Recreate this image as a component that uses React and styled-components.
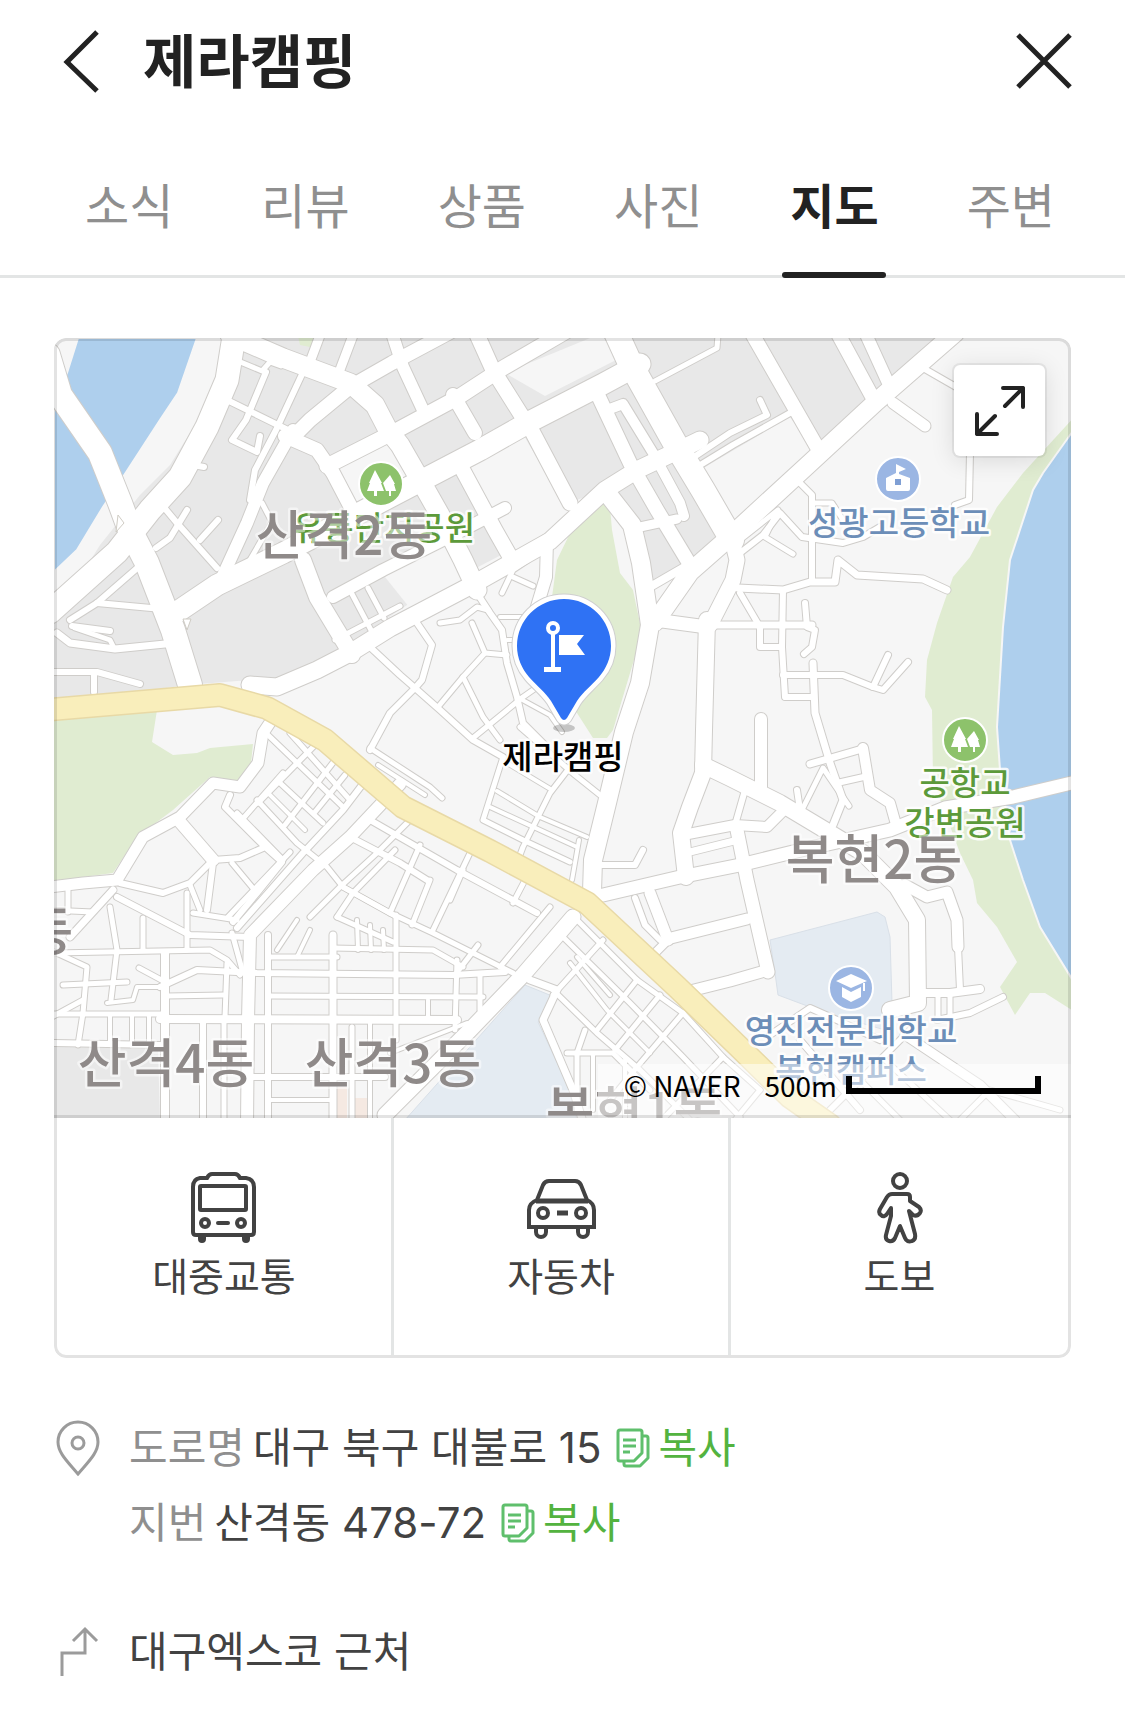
import React, { useState } from "react";
import styled, { createGlobalStyle } from "styled-components";

// Style
const colors = {
  text: "#222",
  body: "#424242",
  muted: "#8f8f8f",
  line: "#e3e5e5",
  green: "#53b33f",
  greenIcon: "#5fbf6c",
};

const GlobalStyle = createGlobalStyle`
  *, *::before, *::after {
    box-sizing: border-box;
  }
  body {
    margin: 0;
    background: #fff;
    color: ${colors.text};
    font-family: "Noto Sans CJK KR", "Noto Sans", sans-serif;
  }
  button {
    padding: 0;
    border: 0;
    background: none;
    color: inherit;
    font: inherit;
    cursor: pointer;
  }
  a {
    color: inherit;
    text-decoration: none;
  }
  svg {
    display: block;
    flex: none;
  }
`;

const Header = styled.header`
  display: flex;
  align-items: center;
  height: 122px;
  padding: 0 50px 0 60px;
`;
const Title = styled.h1`
  flex: 1;
  margin: 0 0 0 38px;
  padding-bottom: 6px;
  font-size: 58px;
  font-weight: 700;
  line-height: 80px;
`;
const IconButton = styled.button`
  display: flex;
  align-items: center;
  justify-content: center;
`;

const Tabs = styled.nav`
  display: flex;
  height: 156px;
  padding: 0 26px 0 41px;
  border-bottom: 3px solid ${colors.line};
`;
const Tab = styled.a`
  position: relative;
  flex: 1;
  padding-top: 46px;
  color: ${(p) => (p.$active ? colors.text : colors.muted)};
  font-size: 48px;
  font-weight: ${(p) => (p.$active ? 700 : 400)};
  line-height: 70px;
  text-align: center;
  &::after {
    content: "";
    display: ${(p) => (p.$active ? "block" : "none")};
    position: absolute;
    bottom: -3px;
    left: 50%;
    width: 104px;
    height: 6px;
    margin-left: -52px;
    border-radius: 3px;
    background: ${colors.text};
  }
`;

const Main = styled.main`
  padding: 60px 54px 44px;
`;
const Card = styled.section`
  position: relative;
  overflow: hidden;
  border-radius: 12px;
  &::after {
    content: "";
    position: absolute;
    inset: 0;
    border: 3px solid rgba(0, 0, 0, 0.11);
    border-radius: 12px;
    pointer-events: none;
  }
`;
const MapBox = styled.div`
  position: relative;
  &::after {
    content: "";
    position: absolute;
    right: 0;
    bottom: 0;
    left: 0;
    height: 3px;
    background: rgba(0, 0, 0, 0.11);
  }
`;
const MapSvg = styled.svg`
  width: 100%;
  height: auto;
`;
const Label = styled.text`
  fill: ${(p) => p.$color};
  font-family: "Noto Sans CJK KR", "Noto Sans", sans-serif;
  font-size: 33px;
  font-weight: 500;
  text-anchor: middle;
  paint-order: stroke;
  stroke: rgba(255, 255, 255, 0.85);
  stroke-width: 5px;
  stroke-linejoin: round;
`;
const District = styled(Label)`
  fill: #8f8a89;
  font-size: 53px;
  stroke: rgba(255, 255, 255, 0.5);
`;
const ExpandButton = styled.button`
  position: absolute;
  top: 27px;
  right: 26px;
  display: flex;
  align-items: center;
  justify-content: center;
  width: 91px;
  height: 91px;
  border-radius: 6px;
  background: #fff;
  box-shadow: 0 0 0 2px rgba(0, 0, 0, 0.06), 0 4px 24px rgba(0, 0, 0, 0.12);
`;
const Legend = styled.div`
  position: absolute;
  right: 0;
  bottom: 0;
  display: flex;
  align-items: center;
  height: 54px;
  padding: 0 30px 12px 26px;
  background: rgba(255, 255, 255, 0.5);
  color: #000;
  font-size: 28px;
  line-height: 40px;
`;
const Scale = styled.span`
  width: 195px;
  height: 18px;
  margin-left: 9px;
  border: 6px solid #000;
  border-top: 0;
`;
const Distance = styled.span`
  margin-left: 24px;
`;

const Modes = styled.div`
  display: grid;
  grid-template-columns: repeat(3, 1fr);
  padding: 0 3px 3px;
`;
const Mode = styled.a`
  display: flex;
  flex-direction: column;
  align-items: center;
  padding: 54px 0 51px;
  border-right: 3px solid ${colors.line};
  color: ${colors.body};
  font-size: 39px;
  line-height: 60px;
  &:last-child {
    border-right: 0;
  }
`;

const Info = styled.div`
  display: flex;
  align-items: flex-start;
  margin-top: ${(p) => p.$top}px;
  color: ${colors.body};
  font-family: Inter, "Noto Sans CJK KR", sans-serif;
  font-size: 42px;
  line-height: 75px;
`;
const InfoIcon = styled.div`
  display: flex;
  align-items: center;
  width: 75px;
  height: 75px;
`;
const Line = styled.p`
  display: flex;
  align-items: center;
  margin: 0;
`;
const Kind = styled.span`
  margin-right: 8px;
  color: ${colors.muted};
`;
const CopyButton = styled.button`
  display: flex;
  align-items: center;
  gap: 8px;
  margin-left: 15px;
  color: ${colors.green};
`;

// Map geometry, every road is [width, "x,y x,y ..."]
const roads = [
  // river side and industrial blocks
  [24, "48,355 60,395 100,453 120,503 130,530 147,563 173,630 190,685"],
  [23, "235,330 227,380 207,427 180,477 150,510 117,552 50,612"],
  [21, "177,612 217,585 283,553 350,518 390,497 480,450 533,420 603,384 640,364"],
  [17, "250,685 277,687 317,670 350,653 390,628 470,586 550,541 605,490 637,470 673,453 700,440"],
  [12, "333,597 383,570 463,530 505,508"],
  [19, "230,335 283,358 350,383 375,405 388,430 400,445 427,492 440,515 463,560 477,590"],
  [14, "293,437 310,420 350,387 392,363 450,332"],
  [12, "293,430 263,483 247,523 220,582"],
  [14, "285,436 317,450 333,473 355,515"],
  [16, "303,560 317,597 352,655"],
  [15, "327,466 390,434 457,398 503,368 565,332"],
  [12, "391,330 403,367 423,410"],
  [9, "355,330 338,375"],
  [9, "322,330 310,362"],
  [15, "475,330 493,370 520,413 533,433 570,503"],
  [14, "453,395 475,433"],
  [15, "460,465 495,530 512,560"],
  [24, "614,328 630,363 677,447 703,490 732,540"],
  [14, "597,393 630,463 657,510 692,568"],
  [10, "607,410 623,404 653,453 680,503 684,516"],
  [9, "640,527 677,519"],
  [8, "650,587 688,565"],
  [18, "655,622 690,572 723,543 810,463 877,401 955,333"],
  [14, "750,330 817,447"],
  [14, "836,330 874,400"],
  [12, "864,330 890,387"],
  [5, "718,335 717,348 655,381"],
  [6, "697,455 730,433 767,415 760,400"],
  [6, "697,467 733,445 790,413"],
  [6, "923,368 963,391 970,453 969,500 955,505"],
  [11, "893,403 925,426"],
  [5, "238,361 262,371 270,362 281,366"],
  [6, "266,372 246,420 232,440 257,452 260,436"],
  [6, "227,400 290,431"],
  [6, "304,370 276,430 255,470 250,500"],
  [6, "193,465 204,467"],
  [6, "162,505 177,523 217,568"],
  [6, "156,548 170,538 187,510"],
  [6, "200,540 218,520"],
  [6, "70,620 97,603 143,563"],
  [6, "97,603 162,609"],
  [6, "72,626 110,631"],
  [7, "57,633 70,643 115,649 175,643"],
  [5, "75,628 110,640 114,648"],
  [6, "50,672 97,672 140,684"],
  [6, "94,672 94,692"],
  [5, "352,594 372,632"],
  [5, "368,588 384,618"],
  [5, "335,640 400,606"],
  [5, "262,503 272,522 250,560"],
  // main road through the middle and to the east
  [18, "607,493 632,525 641,563 650,625 640,683 624,732 607,803 593,860 592,892"],
  [13, "655,620 707,627"],
  [7, "707,625 812,625"],
  [15, "710,625 733,580 737,560 732,540"],
  [16, "707,620 704,730 703,773 690,807 681,833 686,877"],
  [16, "703,765 730,778 780,803 830,833 863,853 897,887 917,920 918,1003 890,1010"],
  [12, "761,719 761,787"],
  [7, "813,663 815,713 830,763 843,800 833,825"],
  [10, "863,748 870,790 890,803 897,828"],
  [7, "810,764 862,749"],
  [6, "837,783 868,776"],
  [6, "797,790 800,810"],
  [5, "803,808 823,768 849,806"],
  [13, "603,895 680,877 740,865 797,851 890,830 945,808 1013,797 1080,781"],
  [10, "683,835 735,825 767,827 787,807"],
  [7, "690,852 738,840"],
  [13, "737,830 747,880 768,972"],
  [11, "768,970 730,981 690,991"],
  [11, "667,939 747,919"],
  [11, "650,893 668,940"],
  [6, "635,898 645,925 660,940"],
  [8, "668,940 650,958"],
  [6, "735,825 745,790"],
  [11, "905,885 927,897 947,892 957,920 958,947"],
  [6, "958,947 960,990"],
  [8, "922,993 950,993 980,989"],
  [6, "937,1020 970,1013 1003,997"],
  [5, "938,995 938,1020"],
  [5, "950,995 950,1018"],
  [6, "783,590 782,647 785,697 813,697"],
  [7, "738,588 783,590 810,582 835,582 838,560 857,575 923,579 947,590"],
  [6, "800,483 812,495 812,582"],
  [6, "740,553 763,535 780,513 802,537 843,543 863,537 880,527"],
  [5, "740,540 778,510 765,537 793,554"],
  [5, "812,503 832,503 843,520"],
  [6, "740,593 760,627 760,647 782,647"],
  [6, "805,603 807,627 815,630 812,647 804,654"],
  [6, "783,675 843,675 873,687 888,655"],
  [6, "873,687 883,690 908,662"],
  // lanes around the pin
  [6, "473,587 490,613 502,630 507,663 517,697 523,723 545,745"],
  [5, "440,623 460,620 477,607 488,610"],
  [5, "472,623 485,653 507,655"],
  [5, "485,653 463,677 438,707"],
  [5, "463,677 483,717 500,740"],
  [6, "370,647 400,675 415,688 440,710 473,740 503,757"],
  [6, "417,623 432,645 422,680 415,688 390,713 370,750"],
  [12, "547,540 546,577 536,610"],
  [5, "528,560 513,570 502,593"],
  [5, "513,577 533,586"],
  [4, "500,617 528,617"],
  [4, "507,640 522,640"],
  [5, "473,738 523,697 543,683"],
  [4, "517,697 550,715 562,732"],
  [5, "503,757 483,820 523,840 570,862"],
  [4, "507,763 552,790"],
  [5, "520,727 575,775 600,795"],
  [5, "570,767 550,793 523,847 515,868"],
  [4, "497,791 540,817 587,837"],
  [4, "490,807 577,847"],
  [4, "579,840 572,880"],
  [6, "602,865 635,865 643,850"],
  [5, "370,748 430,787 442,798"],
  [4, "378,765 425,795"],
  // south west
  [11, "50,887 83,883 117,880 143,837 180,817 213,783 240,787 258,763 263,733 275,715"],
  [12, "180,822 213,860"],
  [6, "120,883 163,893 190,883 213,860 240,858 263,848"],
  [6, "230,795 225,807 263,845 282,862 257,893 233,922"],
  [12, "400,784 350,837 313,870 250,935 248,1020 247,1125"],
  [6, "237,928 303,853 343,810 362,785"],
  [5, "228,917 290,852"],
  [5, "237,813 283,860"],
  [5, "257,800 297,843 327,867 343,887 397,917"],
  [5, "280,783 323,823"],
  [5, "268,735 343,807"],
  [5, "290,733 350,800"],
  [4, "268,793 305,830"],
  [5, "283,773 240,822"],
  [5, "315,745 258,803"],
  [5, "335,760 285,825"],
  [5, "345,775 315,812"],
  [6, "350,837 400,863 427,880"],
  [5, "310,917 340,887 377,853 410,820"],
  [5, "337,917 393,942"],
  [5, "337,917 353,893 395,850"],
  [6, "370,820 457,870 537,913"],
  [5, "343,887 390,913 433,933 513,973"],
  [5, "420,845 390,913"],
  [5, "470,853 433,930"],
  [5, "450,900 463,870"],
  [5, "525,880 513,903"],
  [5, "430,880 412,925"],
  [15, "573,917 523,975 470,1030 385,1115"],
  [5, "550,907 500,967"],
  [5, "478,945 455,975"],
  [5, "50,953 210,950 227,960 240,975"],
  [6, "160,987 197,970 257,973 453,975 505,972"],
  [5, "167,996 223,995"],
  [5, "270,996 483,997"],
  [8, "160,1019 457,1020"],
  [6, "250,1077 385,1077"],
  [5, "270,957 337,957"],
  [5, "333,948 433,950 463,967"],
  [8, "165,953 165,1125"],
  [7, "333,935 333,1125"],
  [6, "268,935 268,1125"],
  [6, "203,1020 203,1125"],
  [5, "224,1020 224,1125"],
  [5, "110,907 117,950 111,1000"],
  [5, "143,918 143,950"],
  [5, "187,893 187,950"],
  [5, "227,963 225,1017"],
  [5, "396,915 396,1040"],
  [5, "457,960 455,1030"],
  [4, "428,1000 428,1018"],
  [5, "480,975 480,1010"],
  [7, "70,937 113,890"],
  [6, "117,897 190,935 250,937"],
  [5, "50,910 93,912"],
  [5, "68,888 68,912"],
  [5, "50,950 87,967 83,1013 78,1045"],
  [5, "63,985 127,982"],
  [5, "139,968 167,983"],
  [4, "107,1003 133,1000 137,987 163,987"],
  [5, "50,1018 83,1000"],
  [5, "50,1014 163,1014"],
  [6, "50,1043 160,1045"],
  [4, "110,1014 110,1043"],
  [4, "132,1014 132,1043"],
  [4, "149,1014 149,1043"],
  [6, "213,863 207,910"],
  [5, "193,913 237,920"],
  [5, "190,885 200,910"],
  [5, "232,933 243,973"],
  [5, "232,863 257,893"],
  [4, "297,920 277,950"],
  [4, "310,930 297,957"],
  [4, "357,920 358,950"],
  [4, "370,925 371,950"],
  [4, "383,930 384,950"],
  [5, "352,1027 352,1125"],
  [4, "390,1053 467,1023"],
  [4, "370,1020 370,1120"],
  [4, "270,1100 330,1100"],
  // south centre
  [7, "530,980 557,990 543,1020 573,1090 584,1125"],
  [5, "577,920 637,980 683,1013 723,1057 760,1090"],
  [5, "563,937 630,1003 683,1057 740,1117"],
  [5, "553,990 597,1033 640,1070 690,1120"],
  [4, "570,963 607,1010 650,1053"],
  [4, "577,957 610,995"],
  [5, "603,940 553,995"],
  [5, "637,980 597,1030"],
  [5, "683,1013 637,1067 610,1100"],
  [5, "723,1057 665,1117"],
  [5, "660,995 615,1050"],
  [5, "760,1090 735,1120"],
  [5, "567,1053 613,1053 650,1090"],
  [5, "585,1030 577,1053 577,1110"],
  [4, "593,1053 593,1110"],
  [4, "625,1060 625,1120"],
  [6, "770,1035 810,1008 837,1020 880,1040"],
  [6, "800,1040 860,1110"],
  [6, "830,1110 890,1050 910,1030"],
  [9, "905,1035 980,1085 1015,1120"],
  [5, "840,1060 900,1120"],
  [5, "885,1060 950,1120"],
  [5, "960,1120 990,1090 1060,1110"],
];

const yellowRoad =
  "45,710 220,695 267,708 325,740 403,807 490,851 587,903 677,987 740,1048 790,1097 830,1125";

const water = [
  "78,338 197,338 178,393 160,420 123,477 103,507 77,550 54,572 54,400 67,373",
  "1075,428 1043,473 1033,490 1010,560 1003,627 997,727 1000,770 1010,840 1023,880 1040,927 1075,984",
];
const parks = [
  "604,495 573,527 557,560 552,597 565,700 577,713 593,738 607,738 613,730 642,633 633,590 620,573 612,530 610,507",
  "1075,416 1023,473 997,507 970,557 953,577 937,623 927,660 925,697 932,710 933,780 960,853 973,880 977,903 997,927 1017,962 1000,987 1015,1015 1030,993 1045,993 1075,1012",
  "50,718 157,710 152,742 173,755 197,753 210,748 253,744 250,773 240,782 210,777 173,810 137,837 113,873 83,877 50,882",
  "298,336 318,336 317,342 310,347 300,345",
];
const schools = [
  "770,940 877,912 885,917 890,937 892,1003 885,1030 830,1014 810,1007 778,995 775,973",
  "525,985 557,998 538,1022 570,1090 577,1120 405,1120",
];
const industry = [
  "225,338 215,385 195,425 170,465 140,495 100,545 50,625 50,705 187,685 250,680 283,680 340,650 410,603 478,567 517,547 577,500 603,490 642,530 650,583 697,560 730,525 820,445 877,393 942,338",
  "50,1047 158,1048 160,1120 50,1120",
];
const openBlocks = [
  "465,467 523,434 568,512 512,555",
  "505,373 600,334 622,357 545,396",
  "700,470 790,417 815,453 730,530",
  "334,471 393,440 420,485 355,513",
  "385,577 445,543 467,575 413,612",
];

function ParkIcon({ x, y }) {
  return (
    <g transform={`translate(${x} ${y})`}>
      <circle r="22" fill="#8dc26b" stroke="#fff" strokeWidth="2" />
      <path
        fill="#fff"
        d="M-6-14 L1-1 H0 L3 7 H-4 V12 H-7 V7 H-14 L-11-1 H-12 Z M9-9 L14 0 H13 L15 7 H10 V12 H8 V7 H5 L2-1 Z"
      />
    </g>
  );
}

function SchoolIcon({ x, y }) {
  return (
    <g transform={`translate(${x} ${y})`}>
      <circle r="22" fill="#9bb6e3" stroke="#fff" strokeWidth="2" />
      <path fill="#fff" d="M-2-15 L8-10 L1-7 V-5 L12-1 V10 Q12 12 10 12 H-10 Q-12 12-12 10 V-1 L-2-6 Z" />
      <rect x="-3" y="0" width="6" height="6" fill="#7f9fd4" />
    </g>
  );
}

function CollegeIcon({ x, y }) {
  return (
    <g transform={`translate(${x} ${y})`}>
      <circle r="22" fill="#9bb6e3" stroke="#fff" strokeWidth="2" />
      <path fill="#fff" d="M0-14 L16-7 L0 0 L-15-7 Z M-9-1 L0 4 L10-1 V9 L0 14 L-9 9 Z M12-5 H14 V3 H12 Z" />
    </g>
  );
}

const pinShape =
  "M564 599 C590 599 611 620 611 646 C611 658 606 669 599 677 C591 686 583 692 577 701 L567 718 Q564 722 561 718 L551 701 C545 692 537 686 529 677 C522 669 517 658 517 646 C517 620 538 599 564 599 Z";

function PlacePin() {
  return (
    <g>
      <ellipse cx="564" cy="728" rx="11" ry="4" fill="#000" opacity="0.2" />
      <path d={pinShape} fill="none" stroke="#cfcfcf" strokeWidth="11" />
      <path d={pinShape} fill="none" stroke="#fff" strokeWidth="9" />
      <path d={pinShape} fill="#2f72f4" />
      <circle cx="553" cy="628" r="5" fill="none" stroke="#fff" strokeWidth="4" />
      <path d="M551 634 H555 V667 H561 V672 H544 V667 H551 Z M559 635 H584 L577 644 L585 655 H559 Z" fill="#fff" />
    </g>
  );
}

function PlaceMap() {
  return (
    <MapSvg viewBox="54 338 1017 780" role="img" aria-label="지도">
      <rect x="54" y="338" width="1017" height="780" fill="#f6f6f6" />
      {industry.map((p) => (
        <polygon key={p} points={p} fill="#e8e8e8" />
      ))}
      {openBlocks.map((p) => (
        <polygon key={p} points={p} fill="#f6f6f6" />
      ))}
      {parks.map((p) => (
        <polygon key={p} points={p} fill="#e0ecd1" />
      ))}
      {water.map((p) => (
        <polygon key={p} points={p} fill="#aecfed" stroke="#f6f6f6" strokeWidth="2" />
      ))}
      {schools.map((p) => (
        <polygon key={p} points={p} fill="#e4ebf2" stroke="#d9e0e8" />
      ))}
      <path d="M337 1087 H347 V1118 H337 Z M355 1098 H369 V1118 H355 Z" fill="#f5e9e2" />

      <g fill="none" strokeLinecap="round" strokeLinejoin="round">
        {roads.map(([w, p]) => (
          <polyline key={p} points={p} stroke="#cfcdca" strokeWidth={w + 2} />
        ))}
        {roads.map(([w, p]) => (
          <polyline key={p} points={p} stroke="#fff" strokeWidth={w} />
        ))}
        <polyline points={yellowRoad} stroke="#e8d9a6" strokeWidth="24" />
        <polyline points={yellowRoad} stroke="#f9eebb" strokeWidth="21" />
      </g>
      <path d="M118 515 L124 523 L116 532 Z M183 619 H191 L187 630 Z" fill="#fff" stroke="#cfccc4" />

      <Label x="384" y="540" $color="#5c9a3a">유통단지공원</Label>
      <Label x="899" y="535" $color="#6c8eb8">성광고등학교</Label>
      <Label x="965" y="795" $color="#5c9a3a">공항교</Label>
      <Label x="965" y="835" $color="#5c9a3a">강변공원</Label>
      <Label x="851" y="1043" $color="#6c8eb8">영진전문대학교</Label>
      <Label x="851" y="1082" $color="#6c8eb8">복현캠퍼스</Label>
      <District x="344" y="555">산격2동</District>
      <District x="874" y="879">복현2동</District>
      <District x="166" y="1083">산격4동</District>
      <District x="393" y="1083">산격3동</District>
      <District x="634" y="1131">복현1동</District>
      <District x="49" y="951">동</District>

      <ParkIcon x={381} y={484} />
      <ParkIcon x={965} y={740} />
      <SchoolIcon x={898} y={479} />
      <CollegeIcon x={851} y={988} />
      <PlacePin />
      <Label x="563" y="769" $color="#000">제라캠핑</Label>
    </MapSvg>
  );
}

function BusIcon() {
  return (
    <svg width="72" height="72" fill="none" stroke="currentColor" strokeWidth="4">
      <path d="M12 6 H19 Q21 2 24 2 H47 Q50 2 52 6 H58 Q66 7 66 15 V60 Q66 63 63 63 H8 Q5 63 5 60 V15 Q5 7 12 6 Z" />
      <rect x="12" y="14" width="46" height="24" rx="1" />
      <circle cx="17" cy="51" r="4" />
      <circle cx="53" cy="51" r="4" />
      <path d="M30 51 H40" strokeLinecap="round" />
      <path d="M14 65 V67 M58 65 V67" strokeWidth="8" strokeLinecap="round" />
    </svg>
  );
}

function CarIcon() {
  return (
    <svg width="72" height="72" fill="none" stroke="currentColor" strokeWidth="4">
      <path d="M12 28 L18 13 Q20 9 24 9 H50 Q54 9 56 13 L62 28 Q69 31 69 38 V55 H4 V38 Q4 31 12 28 Z" />
      <path d="M11 29 H63" strokeWidth="5" />
      <circle cx="18" cy="41" r="5" />
      <circle cx="56" cy="41" r="5" />
      <path d="M32 41 H43" strokeWidth="5" />
      <path d="M11 56 V60 A5 5 0 0 0 21 60 V56 M53 56 V60 A5 5 0 0 0 63 60 V56" />
    </svg>
  );
}

function WalkIcon() {
  return (
    <svg width="72" height="72" fill="none" stroke="currentColor" strokeWidth="4" strokeLinejoin="round">
      <circle cx="36" cy="9" r="7" />
      <path d="M28 22 H43 Q46 22 46 25 V29 L55 35 Q58 38 56 41 Q53 45 49 43 L45 39 L51 62 Q52 68 48 69 Q43 71 41 66 L36 54 L31 66 Q29 70 25 69 Q21 68 22 63 L27 44 V36 L23 42 Q20 46 17 43 Q14 41 16 37 L23 25 Q25 22 28 22 Z" />
    </svg>
  );
}

function CopyIcon() {
  return (
    <svg width="34" height="40" fill="none" stroke={colors.greenIcon} strokeWidth="3" strokeLinejoin="round">
      <path d="M4 2 H24 Q26 2 26 4 V25 L18 33 H4 Q2 33 2 31 V4 Q2 2 4 2 Z" />
      <path d="M26 8 H30 Q32 8 32 10 V30 L24 38 H10 Q8 38 8 36 V33" />
      <path d="M7 12 H20 M7 18 H20 M7 24 H14" />
    </svg>
  );
}

const tabs = ["소식", "리뷰", "상품", "사진", "지도", "주변"];
const modes = [
  { name: "대중교통", Icon: BusIcon },
  { name: "자동차", Icon: CarIcon },
  { name: "도보", Icon: WalkIcon },
];
const addresses = [
  { kind: "도로명", value: "대구 북구 대불로 15" },
  { kind: "지번", value: "산격동 478-72" },
];

function App() {
  const [active, setActive] = useState("지도");

  return (
    <>
      <GlobalStyle />
      <Header>
        <IconButton aria-label="뒤로">
          <svg width="45" height="64" fill="none" stroke={colors.text} strokeWidth="5">
            <path d="M37 3 L7 33 L37 62" />
          </svg>
        </IconButton>
        <Title>제라캠핑</Title>
        <IconButton aria-label="닫기">
          <svg width="62" height="62" fill="none" stroke={colors.text} strokeWidth="5">
            <path d="M5 5 L57 57 M57 5 L5 57" />
          </svg>
        </IconButton>
      </Header>
      <Tabs>
        {tabs.map((name) => (
          <Tab
            key={name}
            href={`#${name}`}
            $active={name === active}
            onClick={() => setActive(name)}
          >
            {name}
          </Tab>
        ))}
      </Tabs>

      <Main>
        <Card>
          <MapBox>
            <PlaceMap />
            <Legend>
              <span>© NAVER</span>
              <Distance>500m</Distance>
              <Scale />
            </Legend>
            <ExpandButton aria-label="지도 확대">
              <svg width="50" height="50" fill="none" stroke={colors.text} strokeWidth="4" strokeLinecap="round" strokeLinejoin="round">
                <path d="M30 20 L48 2 M28 2 H48 V21 M20 30 L2 48 M2 28 V48 H22" />
              </svg>
            </ExpandButton>
          </MapBox>
          <Modes>
            {modes.map(({ name, Icon }) => (
              <Mode key={name} href="#route">
                <Icon />
                {name}
              </Mode>
            ))}
          </Modes>
        </Card>

        <Info $top={52}>
          <InfoIcon>
            <svg width="48" height="58" fill="none" stroke="#9b9b9b" strokeWidth="3">
              <path d="M24 3 C35 3 44 12 44 23 C44 34 34 43 24 55 C14 43 4 34 4 23 C4 12 13 3 24 3 Z" />
              <circle cx="24" cy="24" r="6" />
            </svg>
          </InfoIcon>
          <div>
            {addresses.map(({ kind, value }) => (
              <Line key={kind}>
                <Kind>{kind}</Kind>
                {value}
                <CopyButton>
                  <CopyIcon />
                  복사
                </CopyButton>
              </Line>
            ))}
          </div>
        </Info>
        <Info $top={54}>
          <InfoIcon>
            <svg width="48" height="52" fill="none" stroke="#9b9b9b" strokeWidth="3">
              <path d="M8 50 V27 H31 V3 M19 15 L31 3 L43 15" />
            </svg>
          </InfoIcon>
          <Line>대구엑스코 근처</Line>
        </Info>
      </Main>
    </>
  );
}

export default App;
